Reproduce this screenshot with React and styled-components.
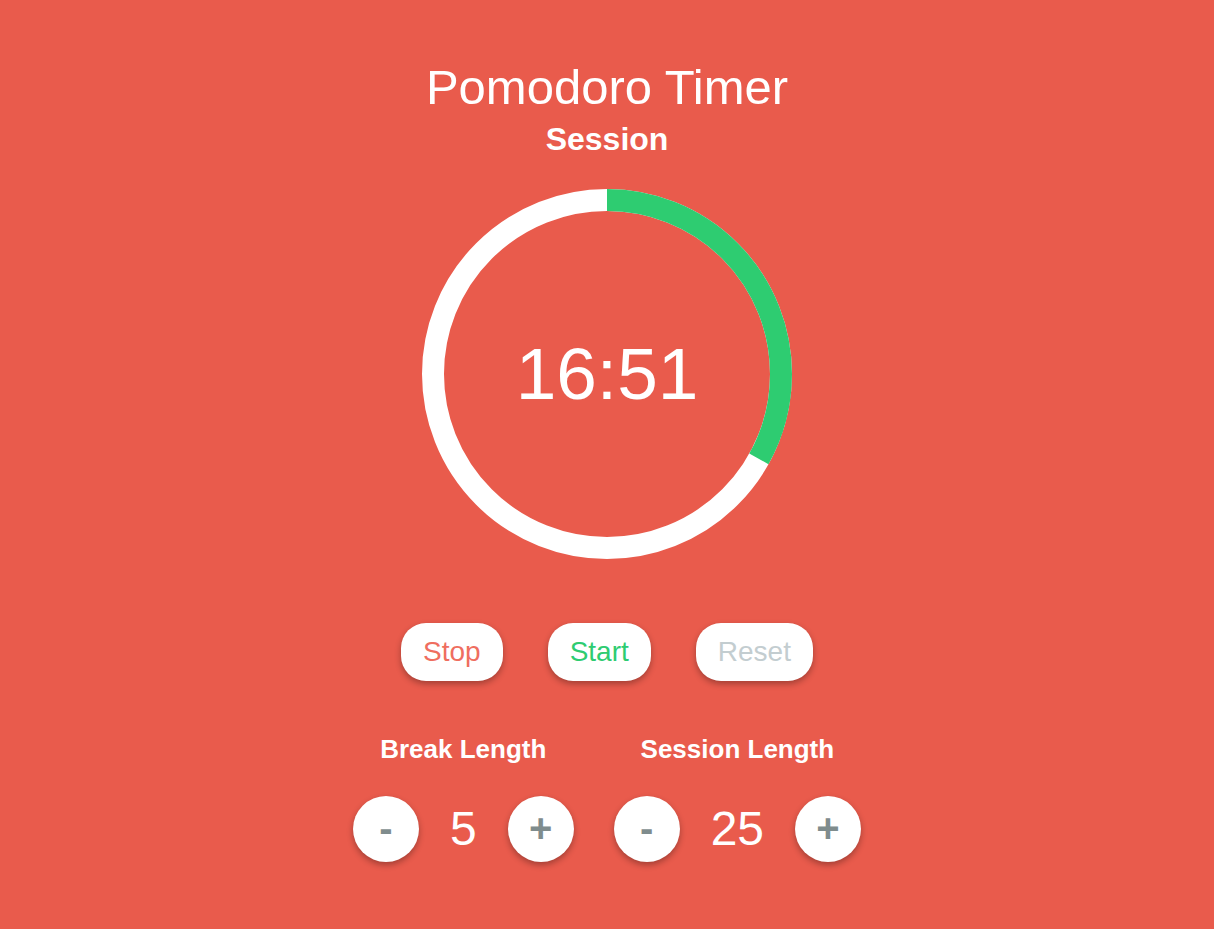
import React from 'react';
import styled, { createGlobalStyle } from 'styled-components';

const GlobalStyle = createGlobalStyle`
    html, body {
        margin: 0;
        padding: 0;
        background: #e95b4c;
    }

    body {
        font-family: "Liberation Sans", Arial, Helvetica, sans-serif;
        color: #fff;
    }
`;

const Page = styled.div`
    min-height: 929px;
    display: flex;
    flex-direction: column;
    align-items: center;
    padding-top: 59px;
    box-sizing: border-box;
`;

const Title = styled.h1`
    margin: 0;
    font-size: 49px;
    line-height: 56px;
    font-weight: 400;
`;

const Mode = styled.h2`
    margin: 5px 0 0;
    font-size: 32px;
    line-height: 38px;
    font-weight: 700;
`;

const Dial = styled.div`
    position: relative;
    width: 370px;
    height: 370px;
    margin-top: 31px;
    display: flex;
    align-items: center;
    justify-content: center;

    svg {
        position: absolute;
        inset: 0;
    }
`;

const Time = styled.div`
    position: relative;
    font-size: 73px;
    line-height: 1;
    margin-top: -2px;
`;

const Controls = styled.div`
    display: flex;
    gap: 45px;
    margin-top: 64px;
`;

const PillButton = styled.button`
    height: 58px;
    padding: 0 22px;
    border: none;
    border-radius: 25px;
    background: #fff;
    color: ${props => props.color};
    font-family: "Liberation Sans", Arial, sans-serif;
    font-size: 28px;
    cursor: pointer;
    box-shadow: 0 3px 6px rgba(0, 0, 0, 0.3);
`;

const Settings = styled.div`
    display: grid;
    grid-template-columns: auto auto;
    column-gap: 40px;
    row-gap: 32px;
    margin-top: 53px;
    justify-items: center;
`;

const Label = styled.div`
    font-size: 26px;
    line-height: 30px;
    font-weight: 700;
`;

const Stepper = styled.div`
    display: flex;
    align-items: center;
    gap: 31px;
`;

const RoundButton = styled.button`
    width: 66px;
    height: 66px;
    border: none;
    border-radius: 50%;
    background: #fff;
    color: #7f8c8d;
    font-family: "Liberation Sans", Arial, sans-serif;
    font-size: 40px;
    font-weight: 700;
    line-height: 1;
    padding: 0 0 2px;
    cursor: pointer;
    box-shadow: 0 3px 6px rgba(0, 0, 0, 0.3);
`;

const Value = styled.div`
    font-size: 48px;
    line-height: 1;
`;

const RADIUS = 174;
const STROKE = 22;

const Ring = ({ progress }) => {
    const length = 2 * Math.PI * RADIUS;
    return (
        <svg width="370" height="370" viewBox="0 0 370 370">
            <circle cx="185" cy="185" r={RADIUS} fill="none" stroke="#fff" strokeWidth={STROKE} />
            <circle
                cx="185"
                cy="185"
                r={RADIUS}
                fill="none"
                stroke="#2ecc71"
                strokeWidth={STROKE}
                strokeDasharray={`${length * progress} ${length}`}
                transform="rotate(-90 185 185)"
            />
        </svg>
    );
};

export default function App() {
    const session = 25;
    const remaining = 16 * 60 + 51;
    const progress = 1 - remaining / (session * 60) + 0.005;

    return (
        <Page>
            <GlobalStyle />
            <Title>Pomodoro Timer</Title>
            <Mode>Session</Mode>
            <Dial>
                <Ring progress={progress} />
                <Time>16:51</Time>
            </Dial>
            <Controls>
                <PillButton color="#ef6e5f">Stop</PillButton>
                <PillButton color="#2ecc71">Start</PillButton>
                <PillButton color="#c3cdd0">Reset</PillButton>
            </Controls>
            <Settings>
                <Label>Break Length</Label>
                <Label>Session Length</Label>
                <Stepper>
                    <RoundButton>-</RoundButton>
                    <Value>5</Value>
                    <RoundButton>+</RoundButton>
                </Stepper>
                <Stepper>
                    <RoundButton>-</RoundButton>
                    <Value>{session}</Value>
                    <RoundButton>+</RoundButton>
                </Stepper>
            </Settings>
        </Page>
    );
}
